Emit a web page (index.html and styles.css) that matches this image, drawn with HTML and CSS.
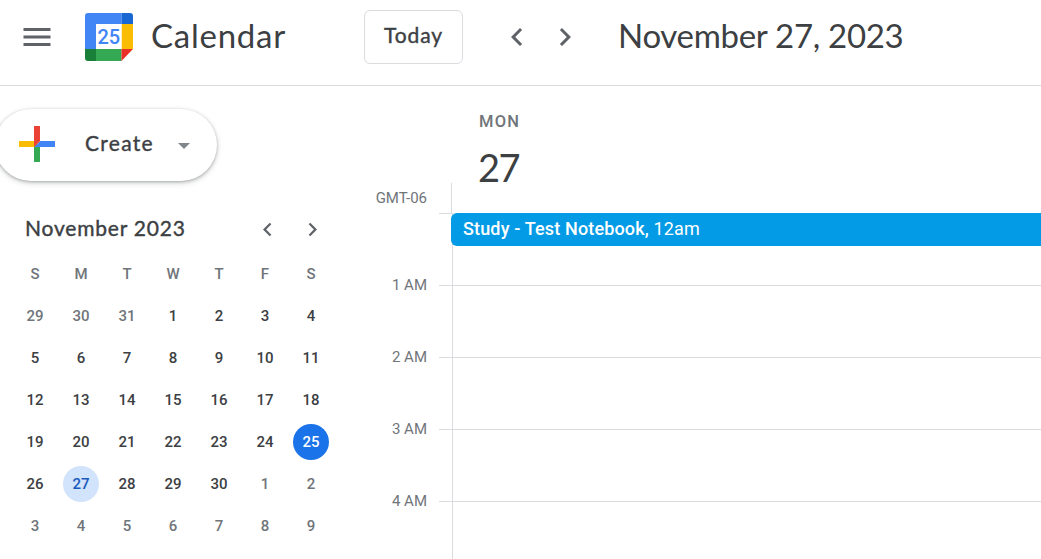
FILE: index.html
```html
<!DOCTYPE html>
<html lang="en">
<head>
<meta charset="utf-8">
<title>Calendar</title>
<link rel="stylesheet" href="styles.css">
</head>
<body>
<header class="topbar">
  <svg class="menu" viewBox="0 0 24 24"><path d="M3 18h18v-2H3v2zm0-5h18v-2H3v2zm0-7v2h18V6H3z"/></svg>
  <svg class="logo" viewBox="0 0 48 48">
    <path fill="#4285f4" d="M3 0h33.500v11H11v25H0V3a3 3 0 0 1 3-3z"/>
    <path fill="#1967d2" d="M36.500 0H45a3 3 0 0 1 3 3v8H36.500z"/>
    <path fill="#fbbc04" d="M36.500 11H48v25H36.500z"/>
    <path fill="#34a853" d="M11 36h25.500v12H11z"/>
    <path fill="#188038" d="M0 36h11v12H3a3 3 0 0 1-3-3z"/>
    <path fill="#fff" d="M11 11h25.500v25H11z"/>
    <path fill="#ea2f26" d="M36.500 36H48L36.500 48z"/>
    <text class="logo-day" x="23.800" y="31.200" text-anchor="middle">25</text>
  </svg>
  <h1 class="brand">Calendar</h1>
  <button class="today">Today</button>
  <nav class="arrows">
    <svg viewBox="0 0 24 24"><path d="M15.410 7.410L14 6l-6 6 6 6 1.410-1.410L10.830 12z"/></svg>
    <svg viewBox="0 0 24 24"><path d="M10 6L8.590 7.410 13.170 12l-4.580 4.590L10 18l6-6z"/></svg>
  </nav>
  <div class="date-title">November 27, 2023</div>
</header>
<main class="content">
  <aside class="sidebar">
    <button class="create">
      <svg class="plus" viewBox="0 0 36 36"><path fill="#34A853" d="M16 16v14h4V20z"/><path fill="#4285F4" d="M30 16H20l-4 4h14z"/><path fill="#FBBC05" d="M6 16v4h10l4-4z"/><path fill="#EA4335" d="M20 16V6h-4v14z"/></svg>
      <span class="create-label">Create</span>
      <svg class="caret" viewBox="0 0 12 6"><path d="M0 0h12L6 6z"/></svg>
    </button>
    <div class="mini-head">
      <span class="mini-title">November 2023</span>
      <svg viewBox="0 0 24 24"><path d="M15.410 7.410L14 6l-6 6 6 6 1.410-1.410L10.830 12z"/></svg>
      <svg viewBox="0 0 24 24"><path d="M10 6L8.590 7.410 13.170 12l-4.580 4.590L10 18l6-6z"/></svg>
    </div>
    <div class="month">
      <span class="dow">S</span><span class="dow">M</span><span class="dow">T</span><span class="dow">W</span><span class="dow">T</span><span class="dow">F</span><span class="dow">S</span>
      <span class="out">29</span><span class="out">30</span><span class="out">31</span><span>1</span><span>2</span><span>3</span><span>4</span>
      <span>5</span><span>6</span><span>7</span><span>8</span><span>9</span><span>10</span><span>11</span>
      <span>12</span><span>13</span><span>14</span><span>15</span><span>16</span><span>17</span><span>18</span>
      <span>19</span><span>20</span><span>21</span><span>22</span><span>23</span><span>24</span><span class="current">25</span>
      <span>26</span><span class="selected">27</span><span>28</span><span>29</span><span>30</span><span class="out">1</span><span class="out">2</span>
      <span class="out">3</span><span class="out">4</span><span class="out">5</span><span class="out">6</span><span class="out">7</span><span class="out">8</span><span class="out">9</span>
    </div>
  </aside>
  <section class="day-view">
    <div class="day-head">
      <div class="gutter"><span class="zone">GMT-06</span><i class="stub"></i></div>
      <div class="day-name"><span class="weekday">MON</span><span class="day-number">27</span></div>
    </div>
    <div class="hours">
      <div class="labels"><span>1 AM</span><span>2 AM</span><span>3 AM</span><span>4 AM</span></div>
      <div class="ticks"><i></i><i></i><i></i><i></i><i></i></div>
      <div class="column">
        <div class="slot"><div class="event"><b>Study - Test Notebook,</b> 12am</div></div>
        <div class="slot"></div><div class="slot"></div><div class="slot"></div><div class="slot"></div>
      </div>
    </div>
  </section>
</main>
</body>
</html>
```
FILE: styles.css
```css
* { box-sizing: border-box; }
body {
  margin: 0;
  width: 1041px;
  height: 559px;
  overflow: hidden;
  background: #fff;
  color: #3c4043;
  font-family: Roboto, "Liberation Sans", sans-serif;
}
svg { display: block; flex: none; fill: #5f6368; }
button { font: inherit; color: inherit; background: #fff; padding: 0; }

.topbar {
  display: flex;
  align-items: center;
  height: 86px;
  padding: 0 0 12px 19px;
  border-bottom: 1px solid #dadce0;
  font-family: Lato, sans-serif;
  white-space: nowrap;
}
.menu { width: 36px; height: 36px; }
.logo { width: 48px; height: 48px; margin-left: 30px; }
.logo-day { font: 500 20px Roboto, sans-serif; fill: #4285f4; }
.brand {
  width: 213px;
  margin: 0 0 0 18px;
  padding-bottom: 3px;
  font-size: 33px;
  font-weight: 400;
  line-height: 48px;
  letter-spacing: .75px;
}
.today {
  width: 99px;
  height: 54px;
  padding-bottom: 4px;
  border: 1px solid #dadce0;
  border-radius: 6px;
  font-size: 21px;
  letter-spacing: .9px;
  -webkit-text-stroke: 0.4px #3c4043;
}
.arrows { display: flex; gap: 12px; margin-left: 36px; }
.arrows svg { width: 36px; height: 36px; }
.date-title {
  margin-left: 35px;
  padding-bottom: 4px;
  font-size: 33px;
  line-height: 48px;
  letter-spacing: -.3px;
}

.content { display: flex; height: 473px; }
.sidebar { width: 366px; }
.create {
  display: flex;
  align-items: center;
  width: 222px;
  height: 72px;
  margin: 23px 0 0 -5px;
  padding: 0 0 2px 15px;
  border: 0;
  border-radius: 36px;
  box-shadow: 0 1px 3px rgba(60, 64, 67, .35), 0 2px 5px 1px rgba(60, 64, 67, .15);
}
.plus { width: 54px; height: 54px; }
.create-label {
  width: 93px;
  margin-left: 21px;
  padding-bottom: 4px;
  text-align: left;
  font: 21px Lato, sans-serif;
  letter-spacing: 1.300px;
  -webkit-text-stroke: 0.4px #3c4043;
}
.caret { width: 12px; height: 6px; margin-top: 3px; fill: #80868b; }
.mini-head { display: flex; align-items: center; height: 30px; margin-top: 33px; padding-left: 25px; }
.mini-title {
  width: 228.500px;
  padding-bottom: 4px;
  font: 21px Lato, sans-serif;
  letter-spacing: .8px;
  -webkit-text-stroke: 0.4px #3c4043;
}
.mini-head svg { width: 27px; height: 27px; margin-right: 18px; }
.month {
  display: grid;
  grid-template-columns: repeat(7, 36px);
  grid-auto-rows: 36px;
  gap: 6px 10px;
  margin: 12px 0 0 17px;
  font-size: 15px;
  font-weight: 500;
  line-height: 36px;
  text-align: center;
}
.month .dow, .month .out { color: #70757a; }
.month .current { background: #1a73e8; color: #fff; border-radius: 50%; }
.month .selected { background: #d2e3fc; color: #185abc; border-radius: 50%; }

.day-view { flex: 1; min-width: 0; }
.day-head { display: flex; height: 127px; }
.gutter { display: flex; justify-content: flex-end; align-items: flex-end; width: 86px; }
.zone { margin: 0 24px 6px 0; font-size: 15px; line-height: 18px; color: #70757a; }
.stub { width: 1px; height: 30px; background: #dadce0; }
.day-name { display: flex; flex-direction: column; padding: 26px 0 0 27px; }
.weekday { font-size: 16.500px; font-weight: 500; line-height: 20px; letter-spacing: 1.200px; color: #70757a; }
.day-number { margin: 13px 0 0 -1px; font: 38px/44px Lato, sans-serif; letter-spacing: -1.500px; }
.hours { display: flex; height: 346px; }
.labels { width: 73px; padding: 63px 12px 0 0; text-align: right; }
.labels span { display: block; height: 72px; font-size: 15px; line-height: 18px; color: #70757a; }
.ticks { width: 13px; }
.ticks i { display: block; height: 72px; border-top: 1px solid #dadce0; }
.column { flex: 1; min-width: 0; border-left: 1px solid #dadce0; }
.slot { height: 72px; border-bottom: 1px solid #dadce0; }
.slot:first-child { height: 73px; }
.event {
  height: 33px;
  margin-left: -2px;
  padding-left: 12px;
  border-radius: 6px 0 0 6px;
  background: #039be5;
  color: #fff;
  font-size: 18px;
  line-height: 32px;
  letter-spacing: .15px;
}
.event b { font-weight: 500; }
```
